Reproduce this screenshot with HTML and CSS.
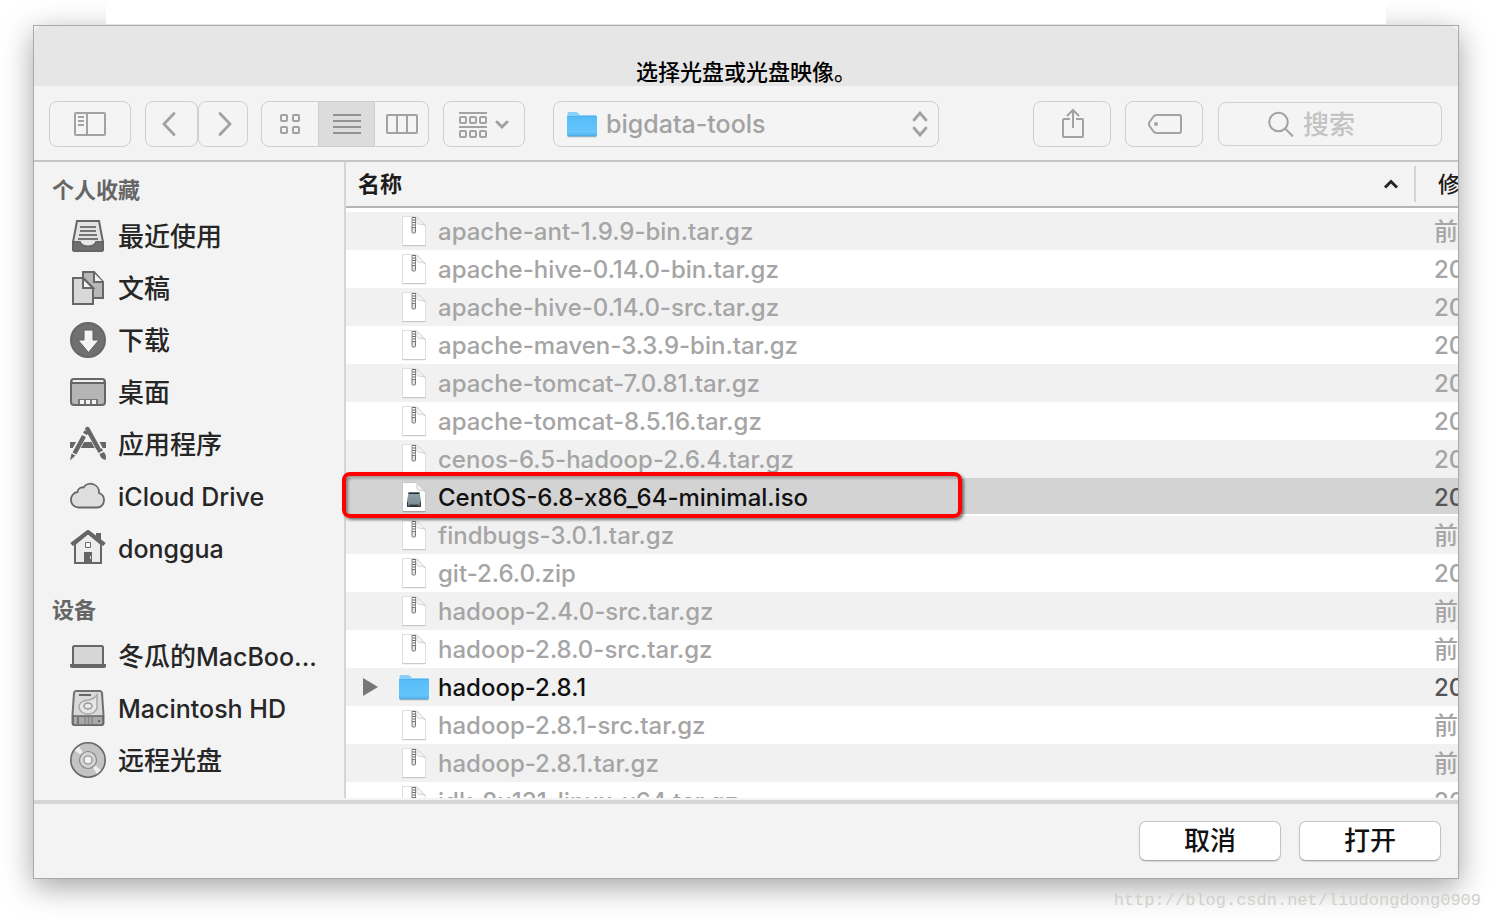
FILE: index.html
```html
<!DOCTYPE html>
<html lang="zh-CN">
<head>
<meta charset="utf-8">
<meta name="viewport" content="width=device-width, initial-scale=1">
<title>选择光盘或光盘映像</title>
<link rel="stylesheet" href="styles.css">
</head>
<body>
<svg class="sprite" aria-hidden="true">
  <defs>
    <linearGradient id="folder-fill" x1="0" y1="0" x2="0" y2="1">
      <stop offset="0" stop-color="#57bdf7"/><stop offset="1" stop-color="#68c7fc"/>
    </linearGradient>
    <linearGradient id="drive-fill" x1="0" y1="0" x2="0" y2="1">
      <stop offset="0" stop-color="#8fa0a6"/><stop offset=".75" stop-color="#7f9096"/><stop offset="1" stop-color="#3f494d"/>
    </linearGradient>
  </defs>
  <symbol id="folder" viewBox="0 0 32 28">
    <path d="M1.500 3.500q0-1.500 1.500-1.500h7q1 0 2 1l2 2h15.500q1 0 1 1V25q0 1-1 1h-27q-1 0-1-1z" fill="#86d0fa"/>
    <path d="M1 6.500h30V25q0 1-1 1H2q-1 0-1-1z" fill="url(#folder-fill)"/>
    <path d="M1 6.500h30M1 24h30" stroke="#47a9e4" stroke-width=".7"/>
    <path d="M1.500 26h29" stroke="#3f8fbf" stroke-width="1"/>
    <path d="M2 27h28" stroke="#000" stroke-opacity=".15"/>
  </symbol>
  <symbol id="archive" viewBox="0 0 26 32">
    <path d="M1.500 1.500h14l9 9v20h-23z" fill="#fff" stroke="#dedede"/>
    <path d="M1.500 30.700h23" stroke="#c4c4c4"/>
    <path d="M16 2v5.500q0 1.500 1.500 1.500 5 0 7 2z" fill="#f8f8f8" stroke="#d2d2d2"/>
    <path d="M11 2v11M14.500 2v11" stroke="#8a8a8a"/>
    <path d="M12.800 2v11" stroke="#666" stroke-width="3" stroke-dasharray="1 1.500"/>
    <path d="M11 12.500h3.500v4.500q0 1-1 1H12q-1 0-1-1z" fill="#e4e4e4" stroke="#777" stroke-width="1"/>
  </symbol>
  <symbol id="disk-image" viewBox="0 0 26 32">
    <path d="M1.500 1.500h14l9 9v20h-23z" fill="#fff" stroke="#c8c8c8"/>
    <path d="M1.500 30.700h23" stroke="#9b9b9b"/>
    <path d="M16 2v5.500q0 1.500 1.500 1.500 5 0 7 2z" fill="#f4f4f4" stroke="#c9c9c9"/>
    <path d="M7.500 11.500h11l1.500 8v5.500q0 1-1 1H7q-1 0-1-1v-5.500z" fill="url(#drive-fill)"/>
    <path d="M7.500 12.200h11" stroke="#20292d" stroke-width="1.500"/>
    <path d="M6.500 21v4.500h13V21" fill="none" stroke="#30393d"/>
    <path d="M9 24.500h8" stroke="#30393d" stroke-width="1.500"/>
  </symbol>
  <symbol id="twisty" viewBox="0 0 16 20"><path d="M1 1l15 9-15 9z" fill="#777"/></symbol>
  <symbol id="recents" viewBox="0 0 36 36">
    <path d="M7 3h22l4 21v7q0 2-2 2H5q-2 0-2-2v-7z" fill="#e2e2e2" stroke="#666" stroke-width="2"/>
    <path d="M3 24h7.500c1 5.500 14 5.500 15 0H33v7q0 2-2 2H5q-2 0-2-2z" fill="#6f6f6f" stroke="#666" stroke-width="2"/>
    <path d="M10.500 22.500c1 6.500 14 6.500 15 0z" fill="#e8e8e8"/>
    <path d="M10 9h16M10 13h16M9 17h18M8 21h20" stroke="#757575" stroke-width="2"/>
  </symbol>
  <symbol id="documents" viewBox="0 0 36 36">
    <path d="M13 2h11l9 10v16H13z" fill="#b7b7b7" stroke="#666" stroke-width="2"/>
    <path d="M24 3v9h9" fill="#f3f3f3" stroke="#666" stroke-width="2"/>
    <path d="M3 8h10l10 10v16H3z" fill="#d8d8d8" stroke="#666" stroke-width="2"/>
    <path d="M13 8v10h10z" fill="#f3f3f3" stroke="#666" stroke-width="2"/>
  </symbol>
  <symbol id="downloads" viewBox="0 0 36 36">
    <circle cx="18" cy="18" r="17" fill="#707070" stroke="#666" stroke-width="2"/>
    <path d="M14 8h9v10h6L18.500 30.500 8 18h6z" fill="#f3f3f3" stroke="#5e5e5e" stroke-width="1"/>
  </symbol>
  <symbol id="desktop" viewBox="0 0 36 36">
    <rect x="1" y="5" width="34" height="26" rx="3" fill="#b5b5b5" stroke="#666" stroke-width="2"/>
    <path d="M3 6h30v2H3z" fill="#f0f0f0"/><path d="M2 9h32" stroke="#666" stroke-width="2"/>
    <path d="M8 30v-5h20v5z" fill="#777"/>
    <path d="M10 26h4v4h-4zM16 26h4v4h-4zM22 26h4v4h-4z" fill="#f3f3f3"/>
  </symbol>
  <symbol id="applications" viewBox="0 0 36 36">
    <path d="M0 16h36v6H0z" fill="#666"/>
    <path d="M17 3L2 31" stroke="#f3f3f3" stroke-width="7"/>
    <path d="M18 2l16 30" stroke="#f3f3f3" stroke-width="7"/>
    <path d="M14 10L4.500 27.500" stroke="#666" stroke-width="4.500"/>
    <path d="M16.500 5.500L15 8" stroke="#666" stroke-width="4.500"/>
    <path d="M1.500 27.500l4 2L0 34.500z" fill="#666"/>
    <path d="M17.500 3l10.500 19" stroke="#666" stroke-width="4.500" stroke-linecap="round"/>
    <path d="M27 24.500l4.500-2.500 1.500 2.500-4.500 2.500z" fill="#666"/>
    <path d="M29.500 28l4.500-2q3 4 1.500 8-5-1-6-6z" fill="#666"/>
  </symbol>
  <symbol id="cloud" viewBox="0 0 36 36">
    <path d="M9 29.500a7.800 7.800 0 0 1-1.500-15.500 5 5 0 0 1 6-4.500A8.500 8.500 0 0 1 29 15a7.500 7.500 0 0 1-1.500 14.500z" fill="#dedede" stroke="#666" stroke-width="1.800"/>
  </symbol>
  <symbol id="home" viewBox="0 0 36 36">
    <path d="M26 3h5v10h-5z" fill="#666"/>
    <path d="M5 14L18 3l13 11v19H5z" fill="#ececec" stroke="#666" stroke-width="2"/>
    <path d="M1.500 14.500L18 2l16.500 12.500" fill="none" stroke="#666" stroke-width="4"/>
    <path d="M15.500 12.500h5v5h-5z" fill="#f6f6f6" stroke="#666"/>
    <path d="M14 22h8v12h-8z" fill="#666"/><path d="M20.500 26v3" stroke="#ddd"/>
  </symbol>
  <symbol id="laptop" viewBox="0 0 36 36">
    <rect x="3" y="8" width="30" height="20" rx="1.500" fill="#d6d6d6" stroke="#666" stroke-width="2"/>
    <path d="M0 26h36v2q0 2-2 2H2q-2 0-2-2z" fill="#666"/>
  </symbol>
  <symbol id="hard-drive" viewBox="0 0 36 36">
    <path d="M6 1h24q1.500 0 2 2l1.500 22v8q0 2-2 2h-27q-2 0-2-2v-8L4 3q.5-2 2-2z" fill="#d9d9d9" stroke="#707070" stroke-width="2"/>
    <path d="M3 26h30v7q0 2-2 2H5q-2 0-2-2z" fill="#a9a9a9" stroke="#666" stroke-width="1.500"/>
    <path d="M9 5h12" stroke="#666" stroke-width="2"/>
    <path d="M27 5v12c0 4-4 7-9 7s-9-3-9-7 4-7 10-7q5-1 8-5z" fill="#e6e6e6" stroke="#a8a8a8" stroke-width="1.500"/>
    <ellipse cx="18" cy="16" rx="4" ry="3" fill="#e9e9e9" stroke="#999" stroke-width="1.500"/>
    <path d="M8 27v7" stroke="#666" stroke-width="1.500"/>
    <path d="M15 27v7M18.500 27v7M22 27v7" stroke="#888" stroke-width="1.500"/>
    <circle cx="29" cy="31" r="1" fill="#555"/>
  </symbol>
  <symbol id="disc" viewBox="0 0 36 36">
    <circle cx="18" cy="18" r="17.200" fill="#c3c3c3" stroke="#666" stroke-width="1.600"/>
    <path d="M18 18L4.500 8.500 9 4.500z" fill="#eee"/><path d="M18 18l13 10-4 4z" fill="#eee"/>
    <circle cx="18" cy="18" r="8.500" fill="#d3d3d3" stroke="#8a8a8a" stroke-width="1.200"/>
    <circle cx="18" cy="18" r="4" fill="#f3f3f3" stroke="#8a8a8a" stroke-width="1.200"/>
  </symbol>
</svg>

<div class="page-strip"></div>

<main class="dialog">
  <h1 class="dialog-title">选择光盘或光盘映像。</h1>

  <div class="toolbar">
    <button class="tool tool-sidebar" type="button" aria-label="边栏">
      <svg width="32" height="24" viewBox="0 0 32 24" fill="none" stroke="#a2a2a2" stroke-width="2"><rect x="1" y="1" width="30" height="22" rx="1"/><path d="M13 1v22M4 5h6M4 9h6M4 13h6"/></svg>
    </button>
    <div class="tool-pair">
      <button class="tool tool-back" type="button" aria-label="后退">
        <svg width="14" height="24" viewBox="0 0 14 24" fill="none" stroke="#a2a2a2" stroke-width="2.800" stroke-linecap="round"><path d="M12 1.500L2 12l10 10.500"/></svg>
      </button>
      <button class="tool tool-forward" type="button" aria-label="前进">
        <svg width="14" height="24" viewBox="0 0 14 24" fill="none" stroke="#a2a2a2" stroke-width="2.800" stroke-linecap="round"><path d="M2 1.500L12 12 2 22.500"/></svg>
      </button>
    </div>
    <div class="segments">
      <button class="segment" type="button" aria-label="图标">
        <svg width="20" height="20" viewBox="0 0 20 20" fill="none" stroke="#a2a2a2" stroke-width="2"><rect x="1" y="1" width="6" height="6" rx="1"/><rect x="13" y="1" width="6" height="6" rx="1"/><rect x="1" y="13" width="6" height="6" rx="1"/><rect x="13" y="13" width="6" height="6" rx="1"/></svg>
      </button>
      <button class="segment segment-on" type="button" aria-label="列表" aria-pressed="true">
        <svg width="28" height="20" viewBox="0 0 28 20" stroke="#929292" stroke-width="2"><path d="M0 1h28M0 7h28M0 13h28M0 19h28"/></svg>
      </button>
      <button class="segment" type="button" aria-label="分栏">
        <svg width="32" height="20" viewBox="0 0 32 20" fill="none" stroke="#a2a2a2" stroke-width="2"><rect x="1" y="1" width="30" height="18" rx="1"/><path d="M11 1v18M21 1v18"/></svg>
      </button>
    </div>
    <button class="tool tool-group" type="button" aria-label="分组">
      <svg width="28" height="26" viewBox="0 0 28 26" fill="none" stroke="#a2a2a2" stroke-width="2"><path d="M0 1h28M0 15h28"/><rect x="1" y="5" width="6" height="6" rx="1"/><rect x="11" y="5" width="6" height="6" rx="1"/><rect x="21" y="5" width="6" height="6" rx="1"/><rect x="1" y="19" width="6" height="6" rx="1"/><rect x="11" y="19" width="6" height="6" rx="1"/><rect x="21" y="19" width="6" height="6" rx="1"/></svg>
      <svg width="14" height="10" viewBox="0 0 14 10" fill="none" stroke="#a2a2a2" stroke-width="3" stroke-linecap="round"><path d="M2 2l5 5 5-5"/></svg>
    </button>
    <label class="location">
      <svg class="icon-folder"><use href="#folder"/></svg>
      <select class="location-select" aria-label="位置"><option>bigdata-tools</option></select>
      <svg width="16" height="26" viewBox="0 0 16 26" fill="none" stroke="#a2a2a2" stroke-width="2.800" stroke-linecap="round"><path d="M2 9l6-7 6 7M2 17l6 7 6-7"/></svg>
    </label>
    <button class="tool tool-share" type="button" aria-label="共享">
      <svg width="22" height="32" viewBox="0 0 22 32" fill="none" stroke="#a2a2a2" stroke-width="2"><path d="M8 11H2q-1 0-1 1v16q0 1 1 1h18q1 0 1-1V12q0-1-1-1h-6M11 20V2M5 8l6-6 6 6"/></svg>
    </button>
    <button class="tool tool-tag" type="button" aria-label="标记">
      <svg width="34" height="20" viewBox="0 0 34 20" fill="none" stroke="#a2a2a2" stroke-width="2"><path d="M9 1h22q2 0 2 2v14q0 2-2 2H9q-2 0-3-1l-4.500-6q-1-2 0-4L6 2q1-1 3-1z"/><circle cx="8" cy="10" r="2" fill="#a2a2a2" stroke="none"/></svg>
    </button>
    <label class="search">
      <svg width="26" height="26" viewBox="0 0 26 26" fill="none" stroke="#a2a2a2" stroke-width="2"><circle cx="10.500" cy="11" r="9.300"/><path d="M17 17.500l8 8"/></svg>
      <input class="search-input" type="search" placeholder="搜索" aria-label="搜索">
    </label>
  </div>

  <div class="browser">
    <nav class="sidebar">
      <h2 class="side-heading">个人收藏</h2>
      <a class="side-item" href="#"><svg class="icon-side"><use href="#recents"/></svg><span class="side-label">最近使用</span></a>
      <a class="side-item" href="#"><svg class="icon-side"><use href="#documents"/></svg><span class="side-label">文稿</span></a>
      <a class="side-item" href="#"><svg class="icon-side"><use href="#downloads"/></svg><span class="side-label">下载</span></a>
      <a class="side-item" href="#"><svg class="icon-side"><use href="#desktop"/></svg><span class="side-label">桌面</span></a>
      <a class="side-item" href="#"><svg class="icon-side"><use href="#applications"/></svg><span class="side-label">应用程序</span></a>
      <a class="side-item" href="#"><svg class="icon-side"><use href="#cloud"/></svg><span class="side-label latin">iCloud Drive</span></a>
      <a class="side-item" href="#"><svg class="icon-side"><use href="#home"/></svg><span class="side-label latin">donggua</span></a>
      <h2 class="side-heading side-heading-next">设备</h2>
      <a class="side-item" href="#"><svg class="icon-side"><use href="#laptop"/></svg><span class="side-label">冬瓜的<span class="latin">MacBoo...</span></span></a>
      <a class="side-item" href="#"><svg class="icon-side"><use href="#hard-drive"/></svg><span class="side-label latin">Macintosh HD</span></a>
      <a class="side-item" href="#"><svg class="icon-side"><use href="#disc"/></svg><span class="side-label">远程光盘</span></a>
    </nav>

    <div class="listing">
      <table class="files">
        <colgroup><col><col class="col-date"></colgroup>
        <thead>
          <tr>
            <th class="head-name"><div class="head-box">名称
              <svg width="16" height="10" viewBox="0 0 16 10" fill="none" stroke="#262626" stroke-width="3"><path d="M2 8.500l6-6 6 6"/></svg></div></th>
            <th class="head-date">修改日期</th>
          </tr>
        </thead>
        <tbody>
          <tr><td><div class="file"><svg class="icon-file"><use href="#archive"/></svg>apache-ant-1.9.9-bin.tar.gz</div></td><td class="date">前天</td></tr>
          <tr><td><div class="file"><svg class="icon-file"><use href="#archive"/></svg>apache-hive-0.14.0-bin.tar.gz</div></td><td class="date">2017年</td></tr>
          <tr><td><div class="file"><svg class="icon-file"><use href="#archive"/></svg>apache-hive-0.14.0-src.tar.gz</div></td><td class="date">2017年</td></tr>
          <tr><td><div class="file"><svg class="icon-file"><use href="#archive"/></svg>apache-maven-3.3.9-bin.tar.gz</div></td><td class="date">2017年</td></tr>
          <tr><td><div class="file"><svg class="icon-file"><use href="#archive"/></svg>apache-tomcat-7.0.81.tar.gz</div></td><td class="date">2017年</td></tr>
          <tr><td><div class="file"><svg class="icon-file"><use href="#archive"/></svg>apache-tomcat-8.5.16.tar.gz</div></td><td class="date">2017年</td></tr>
          <tr><td><div class="file"><svg class="icon-file"><use href="#archive"/></svg>cenos-6.5-hadoop-2.6.4.tar.gz</div></td><td class="date">2017年</td></tr>
          <tr class="selected"><td><div class="file"><svg class="icon-file"><use href="#disk-image"/></svg>CentOS-6.8-x86_64-minimal.iso</div></td><td class="date">2017年</td></tr>
          <tr><td><div class="file"><svg class="icon-file"><use href="#archive"/></svg>findbugs-3.0.1.tar.gz</div></td><td class="date">前天</td></tr>
          <tr><td><div class="file"><svg class="icon-file"><use href="#archive"/></svg>git-2.6.0.zip</div></td><td class="date">2017年</td></tr>
          <tr><td><div class="file"><svg class="icon-file"><use href="#archive"/></svg>hadoop-2.4.0-src.tar.gz</div></td><td class="date">前天</td></tr>
          <tr><td><div class="file"><svg class="icon-file"><use href="#archive"/></svg>hadoop-2.8.0-src.tar.gz</div></td><td class="date">前天</td></tr>
          <tr class="enabled"><td><div class="file file-folder"><svg class="icon-twisty"><use href="#twisty"/></svg><svg class="icon-folder"><use href="#folder"/></svg>hadoop-2.8.1</div></td><td class="date">2017年</td></tr>
          <tr><td><div class="file"><svg class="icon-file"><use href="#archive"/></svg>hadoop-2.8.1-src.tar.gz</div></td><td class="date">前天</td></tr>
          <tr><td><div class="file"><svg class="icon-file"><use href="#archive"/></svg>hadoop-2.8.1.tar.gz</div></td><td class="date">前天</td></tr>
          <tr><td><div class="file"><svg class="icon-file"><use href="#archive"/></svg>jdk-8u131-linux-x64.tar.gz</div></td><td class="date">2017年</td></tr>
        </tbody>
      </table>
    </div>
    <div class="highlight"></div>
  </div>

  <div class="actions">
    <button class="action" type="button">取消</button>
    <button class="action" type="button">打开</button>
  </div>
</main>

<footer class="watermark">http://blog.csdn.net/liudongdong0909</footer>
</body>
</html>
```
FILE: styles.css
```css
* {
  box-sizing: border-box;
}

body {
  margin: 0;
  height: 100vh;
  padding: 25px 33px 0;
  display: flex;
  flex-direction: column;
  overflow: hidden;
  background: #fff;
  color: #262626;
  font-family: Inter, "Noto Sans CJK SC", sans-serif;
  font-size: 24px;
  font-weight: 500;
  line-height: 36px;
}

button,
input,
select {
  margin: 0;
  padding: 0;
  font: inherit;
  color: inherit;
}

svg {
  flex: none;
  display: block;
}

.sprite {
  position: absolute;
  width: 0;
  height: 0;
}

/* White page behind the sheet, hiding the shadow along the top edge */
.page-strip {
  position: absolute;
  z-index: 1;
  top: 0;
  left: 106px;
  right: 106px;
  height: 24px;
  background: #fff;
}

.dialog {
  flex: 1;
  min-height: 0;
  display: flex;
  flex-direction: column;
  border: 1px solid #a9a9a9;
  background: #f3f3f3;
  box-shadow: 0 8px 28px rgba(0, 0, 0, 0.36);
}

.dialog-title {
  flex: none;
  height: 60px;
  margin: 0;
  padding-top: 28px;
  border-radius: 8px 8px 0 0;
  background: #e6e6e6;
  color: #000;
  font-size: 22px;
  font-weight: 500;
  line-height: 36px;
  text-align: center;
}

.toolbar {
  flex: none;
  display: flex;
  align-items: center;
  height: 76px;
  padding: 2px 16px 0 15px;
  border-bottom: 2px solid #c6c6c6;
}

.tool,
.segments,
.location,
.search {
  flex: none;
  display: flex;
  align-items: center;
  justify-content: center;
  height: 46px;
  border: 1px solid #d0d0d0;
  border-radius: 8px;
  background: #f4f4f4;
}

.tool-sidebar {
  width: 82px;
}

.tool-pair {
  display: flex;
  margin: 0 13px 0 14px;
}

.tool-back {
  width: 53px;
  padding-right: 6px;
}

.tool-forward {
  width: 50px;
  padding-left: 4px;
}

.segments {
  width: 168px;
  overflow: hidden;
}

.segment {
  flex: 1;
  display: flex;
  align-items: center;
  justify-content: center;
  height: 100%;
  border: 0;
  background: none;
}

.segment:first-child {
  flex: none;
  width: 56px;
}

.segment-on {
  flex: none;
  width: 57px;
  border: 1px solid #cfcfcf;
  border-width: 0 1px;
  background: #dcdcdc;
}

.tool-group {
  width: 82px;
  margin-left: 14px;
  padding-top: 2px;
  gap: 8px;
}

.location {
  width: 386px;
  margin-left: 28px;
  padding: 0 10px 0 12px;
}

.location-select {
  flex: 1;
  height: 100%;
  padding-left: 8px;
  appearance: none;
  border: 0;
  background: none;
  color: #a2a2a2;
  font-size: 25px;
}

.tool-share {
  width: 78px;
  margin-left: auto;
  padding-left: 2px;
}

.tool-tag {
  width: 78px;
  margin: 0 15px 0 14px;
  padding-left: 2px;
}

.search {
  width: 224px;
  height: 44px;
  padding-left: 49px;
  gap: 9px;
}

.search-input {
  flex: 1;
  min-width: 0;
  height: 100%;
  appearance: none;
  border: 0;
  background: none;
  font-size: 26px;
}

.search-input::placeholder {
  color: #c3c3c3;
}

.browser {
  position: relative;
  flex: 1;
  min-height: 0;
  display: flex;
  padding-bottom: 2px;
}

.sidebar {
  flex: none;
  width: 312px;
  border-right: 2px solid #d5d5d5;
  overflow: hidden;
}

.side-heading {
  height: 48px;
  margin: 0;
  padding: 10px 18px 0;
  color: #666;
  font-size: 22px;
  font-weight: 700;
  line-height: 36px;
}

.side-heading-next {
  height: 56px;
  padding-top: 18px;
}

.side-item {
  display: flex;
  align-items: center;
  gap: 12px;
  height: 52px;
  padding-left: 36px;
  color: #262626;
  font-size: 26px;
  text-decoration: none;
  white-space: nowrap;
}

.side-label {
  padding-top: 2px;
}

.latin {
  font-size: 25px;
}

.icon-side {
  width: 36px;
  height: 36px;
}

.listing {
  flex: 1;
  min-width: 0;
  overflow: hidden;
  background: #fff;
}

.files {
  width: 100%;
  table-layout: fixed;
  border-spacing: 0;
  color: #a5a5a5;
}

.col-date {
  width: 42px;
}

.files th {
  height: 46px;
  padding: 4px 0;
  border-bottom: 2px solid #b5b5b5;
  background: #f3f3f3;
  color: #1c1c1c;
  font-size: 22px;
  text-align: left;
  white-space: nowrap;
  overflow: hidden;
}

.head-box {
  display: flex;
  align-items: center;
  justify-content: space-between;
  padding: 0 15px 0 12px;
  border-right: 2px solid #d5d5d5;
}

.files .head-date {
  padding-left: 22px;
  font-weight: 500;
}

.files tbody::before {
  content: "";
  display: table-row;
  height: 4px;
}

.files td {
  height: 38px;
  padding: 2px 0 0;
  overflow: hidden;
  white-space: nowrap;
}

.files tbody tr:nth-child(odd) {
  background: #f1f1f1;
}

.file {
  display: flex;
  align-items: center;
  gap: 11px;
  padding-left: 55px;
}

.file-folder {
  gap: 8px;
  padding-left: 16px;
}

.icon-twisty {
  width: 16px;
  height: 20px;
  margin-right: 12px;
}

.icon-folder {
  width: 32px;
  height: 28px;
}

.icon-file {
  width: 26px;
  height: 32px;
}

.file svg {
  margin-bottom: 2px;
}

.files .date {
  padding-left: 18px;
}

.files .selected td {
  background: linear-gradient(#fff, #fff) bottom / 100% 2px no-repeat #d3d3d3;
}

.selected .file,
.enabled .file {
  color: #111;
}

.selected .date,
.enabled .date {
  color: #555;
}

/* Marks the disk image to choose */
.highlight {
  position: absolute;
  top: 310px;
  left: 308px;
  width: 620px;
  height: 46px;
  border: 4px solid #f00;
  border-radius: 8px;
  box-shadow: 2px 2px 3px rgba(0, 0, 0, 0.5), inset 2px 2px 3px rgba(0, 0, 0, 0.4);
}

.actions {
  flex: none;
  display: flex;
  justify-content: flex-end;
  gap: 18px;
  padding: 17px;
  border-top: 4px solid #d5d5d5;
}

.action {
  width: 142px;
  height: 40px;
  border: 1px solid #c4c4c4;
  border-bottom-color: #a8a8a8;
  border-radius: 7px;
  background: #fff;
  box-shadow: 0 1px 1px rgba(0, 0, 0, 0.12);
  color: #111;
  font-size: 26px;
  line-height: 36px;
}

.watermark {
  position: relative;
  flex: none;
  height: 41px;
  margin-right: -22px;
  padding-top: 4px;
  color: #d0d0cc;
  font-family: "Liberation Mono", monospace;
  font-size: 17px;
  font-weight: 400;
  text-align: right;
}
```
